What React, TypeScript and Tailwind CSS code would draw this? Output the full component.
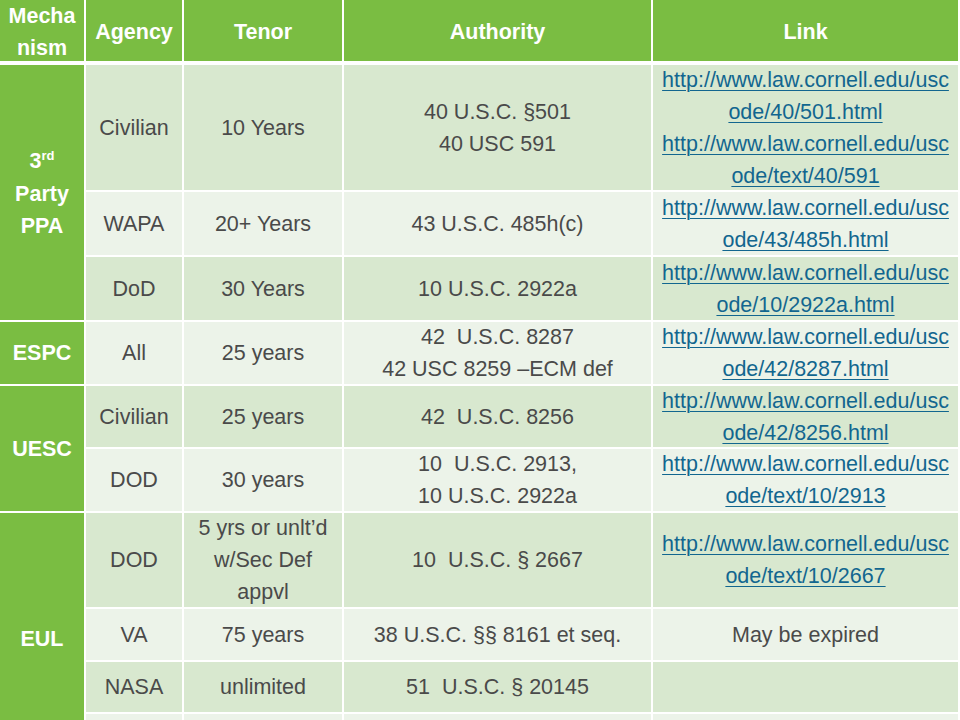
import React from 'react';

type Row = {
  agency: string[];
  tenor: string[];
  authority: string[];
  link: string[];
  isLink?: boolean;
  h: string;
  dark: boolean;
};

const ROWS: Row[] = [
  {
    agency: ['Civilian'],
    tenor: ['10 Years'],
    authority: ['40 U.S.C. §501', '40 USC 591'],
    link: ['http://www.law.cornell.edu/usc', 'ode/40/501.html', 'http://www.law.cornell.edu/usc', 'ode/text/40/591'],
    isLink: true,
    h: 'h-[125px]',
    dark: true,
  },
  {
    agency: ['WAPA'],
    tenor: ['20+ Years'],
    authority: ['43 U.S.C. 485h(c)'],
    link: ['http://www.law.cornell.edu/usc', 'ode/43/485h.html'],
    isLink: true,
    h: 'h-[63px]',
    dark: false,
  },
  {
    agency: ['DoD'],
    tenor: ['30 Years'],
    authority: ['10 U.S.C. 2922a'],
    link: ['http://www.law.cornell.edu/usc', 'ode/10/2922a.html'],
    isLink: true,
    h: 'h-[63px]',
    dark: true,
  },
  {
    agency: ['All'],
    tenor: ['25 years'],
    authority: ['42  U.S.C. 8287', '42 USC 8259 \u2013ECM def'],
    link: ['http://www.law.cornell.edu/usc', 'ode/42/8287.html'],
    isLink: true,
    h: 'h-[62px]',
    dark: false,
  },
  {
    agency: ['Civilian'],
    tenor: ['25 years'],
    authority: ['42  U.S.C. 8256'],
    link: ['http://www.law.cornell.edu/usc', 'ode/42/8256.html'],
    isLink: true,
    h: 'h-[61px]',
    dark: true,
  },
  {
    agency: ['DOD'],
    tenor: ['30 years'],
    authority: ['10  U.S.C. 2913,', '10 U.S.C. 2922a'],
    link: ['http://www.law.cornell.edu/usc', 'ode/text/10/2913'],
    isLink: true,
    h: 'h-[62px]',
    dark: false,
  },
  {
    agency: ['DOD'],
    tenor: ['5 yrs or unlt\u2019d', 'w/Sec Def', 'appvl'],
    authority: ['10  U.S.C. § 2667'],
    link: ['http://www.law.cornell.edu/usc', 'ode/text/10/2667'],
    isLink: true,
    h: 'h-[94px]',
    dark: true,
  },
  {
    agency: ['VA'],
    tenor: ['75 years'],
    authority: ['38 U.S.C. §§ 8161 et seq.'],
    link: ['May be expired'],
    h: 'h-[51px]',
    dark: false,
  },
  {
    agency: ['NASA'],
    tenor: ['unlimited'],
    authority: ['51  U.S.C. § 20145'],
    link: [],
    h: 'h-[50px]',
    dark: true,
  },
  {
    agency: [],
    tenor: [],
    authority: [],
    link: [],
    h: 'h-[50px]',
    dark: false,
  },
];

// which mechanism label sits at which row, and how many rows it spans
const GROUPS = [
  { start: 0, span: 3, label: 'ppa' },
  { start: 3, span: 1, label: 'ESPC' },
  { start: 4, span: 2, label: 'UESC' },
  { start: 6, span: 4, label: 'EUL' },
];

const ROW_START = ['row-start-2', 'row-start-3', 'row-start-4', 'row-start-5', 'row-start-6', 'row-start-7', 'row-start-8', 'row-start-9', 'row-start-10', 'row-start-11'];
const ROW_SPAN: Record<number, string> = { 1: 'row-span-1', 2: 'row-span-2', 3: 'row-span-3', 4: 'row-span-4' };

function Lines({ lines, link }: { lines: string[]; link?: boolean }) {
  return (
    <div className="flex flex-col items-center">
      {lines.map((l, i) => (
        <span
          key={i}
          className={
            link
              ? 'whitespace-pre text-[#12668f] underline decoration-1 underline-offset-[3px]'
              : 'whitespace-pre'
          }
        >
          {l}
        </span>
      ))}
    </div>
  );
}

export default function App() {
  return (
    <div
      className="w-[960px] h-[720px] overflow-hidden bg-white text-[21.5px] leading-[32px] text-[#4a4a4a]"
      style={{ fontFamily: '"Liberation Sans", Arial, sans-serif' }}
    >
      <div className="grid grid-cols-[84px_96px_158px_307px_305px] gap-[2px] bg-white w-[958px]">
        {/* Header */}
        {[['Mecha', 'nism'], ['Agency'], ['Tenor'], ['Authority'], ['Link']].map((h, i) => (
          <div
            key={i}
            className="row-start-1 h-[63px] border-b-2 border-white bg-[#7abd42] flex items-center justify-center text-center font-bold text-white pt-[3px]"
          >
            <Lines lines={h} />
          </div>
        ))}

        {/* Mechanism column */}
        {GROUPS.map((g) => (
          <div
            key={g.label}
            className={`col-start-1 ${ROW_START[g.start]} ${ROW_SPAN[g.span]} bg-[#7abd42] flex items-center justify-center text-center font-bold text-white`}
          >
            {g.label === 'ppa' ? (
              <div className="flex flex-col items-center">
                <span className="leading-[34px]">
                  3<span className="text-[13px] leading-none relative -top-[8px]">rd</span>
                </span>
                <span>Party</span>
                <span>PPA</span>
              </div>
            ) : (
              g.label
            )}
          </div>
        ))}

        {/* Body cells */}
        {ROWS.map((r, i) => {
          const bg = r.dark ? 'bg-[#d8e8cf]' : 'bg-[#ecf3e9]';
          const cell = `${ROW_START[i]} ${r.h} ${bg} flex items-center justify-center text-center`;
          return (
            <React.Fragment key={i}>
              <div className={`col-start-2 ${cell}`}>
                <Lines lines={r.agency} />
              </div>
              <div className={`col-start-3 ${cell}`}>
                <Lines lines={r.tenor} />
              </div>
              <div className={`col-start-4 ${cell}`}>
                <Lines lines={r.authority} />
              </div>
              <div className={`col-start-5 ${cell}`}>
                <Lines lines={r.link} link={r.isLink} />
              </div>
            </React.Fragment>
          );
        })}
      </div>
    </div>
  );
}
